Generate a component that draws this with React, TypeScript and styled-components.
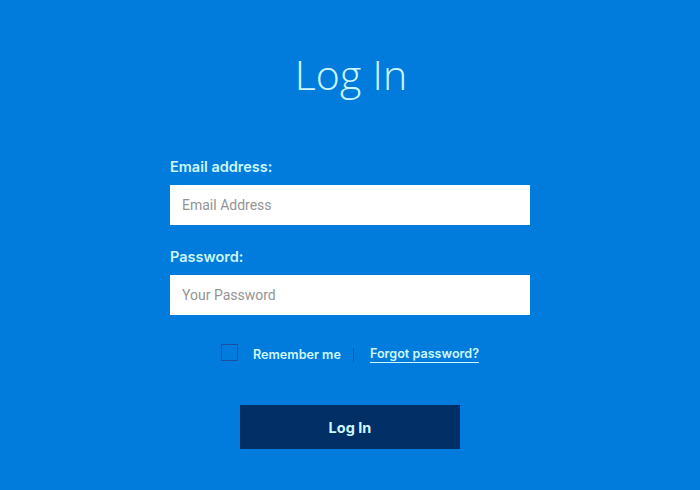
import React from "react";
import styled, { createGlobalStyle } from "styled-components";

const Global = createGlobalStyle`
  html, body { margin: 0; padding: 0; }
  body {
    background: #017cdc;
    font-family: "Open Sans", "Liberation Sans", sans-serif;
    width: 700px;
    height: 490px;
    overflow: hidden;
  }
`;

const Page = styled.main`
  width: 700px;
  height: 490px;
  background: #017cdc;
  display: flex;
  flex-direction: column;
  align-items: center;
  box-sizing: border-box;
  padding-top: 48px;
`;

const Title = styled.h1`
  margin: 0;
  font-family: "Open Sans", sans-serif;
  font-weight: 300;
  font-size: 41px;
  line-height: 52px;
  color: #cdf8ff;
  letter-spacing: 0.2px;
  padding-left: 2px;
`;

const Form = styled.form`
  width: 360px;
  margin-top: 57px;
  display: flex;
  flex-direction: column;
`;

const Field = styled.div`
  display: flex;
  flex-direction: column;
  margin-bottom: ${(p: { $mb: number }) => p.$mb}px;
`;

const Label = styled.label`
  font-family: "Inter", "Open Sans", sans-serif;
  font-weight: 600;
  font-size: 14.5px;
  line-height: 20px;
  color: #cdf8ff;
  margin-bottom: 8px;
`;

const Input = styled.input`
  box-sizing: border-box;
  height: 40px;
  width: 100%;
  border: none;
  outline: none;
  background: #ffffff;
  padding: 0 12px;
  font-family: "Roboto", sans-serif;
  font-size: 14px;
  color: #333;
  &::placeholder { color: #949494; }
`;

const OptionsRow = styled.div`
  display: flex;
  align-items: center;
  justify-content: center;
  margin-top: 31px;
`;

const Check = styled.span`
  width: 17px;
  height: 17px;
  border: 1.5px solid #1a4f9c;
  box-sizing: border-box;
  margin-right: 15px;
  position: relative;
  top: -2px;
`;

const OptionText = styled.span`
  font-family: "Inter", "Open Sans", sans-serif;
  font-weight: 600;
  font-size: 12.6px;
  color: #cdf8ff;
`;

const Divider = styled.span`
  width: 1px;
  height: 14px;
  background: #0c5aa8;
  margin: 0 16px 0 12px;
`;

const Forgot = styled.a`
  font-family: "Inter", "Open Sans", sans-serif;
  font-weight: 600;
  font-size: 12.6px;
  color: #cdf8ff;
  text-decoration: none;
  border-bottom: 1px solid #cdf8ff;
  padding-bottom: 1px;
`;

const ButtonRow = styled.div`
  display: flex;
  justify-content: center;
  margin-top: 42px;
`;

const Button = styled.button`
  width: 220px;
  height: 44px;
  background: #012f66;
  color: #cdf8ff;
  border: none;
  font-family: "Inter", "Open Sans", sans-serif;
  font-weight: 700;
  font-size: 14.5px;
`;

export default function App() {
  return (
    <>
      <Global />
      <Page>
        <Title>Log In</Title>
        <Form onSubmit={(e) => e.preventDefault()}>
          <Field $mb={22}>
            <Label>Email address:</Label>
            <Input placeholder="Email Address" />
          </Field>
          <Field $mb={0}>
            <Label>Password:</Label>
            <Input type="password" placeholder="Your Password" />
          </Field>
          <OptionsRow>
            <Check />
            <OptionText>Remember me</OptionText>
            <Divider />
            <Forgot href="#">Forgot password?</Forgot>
          </OptionsRow>
          <ButtonRow>
            <Button type="submit">Log In</Button>
          </ButtonRow>
        </Form>
      </Page>
    </>
  );
}
